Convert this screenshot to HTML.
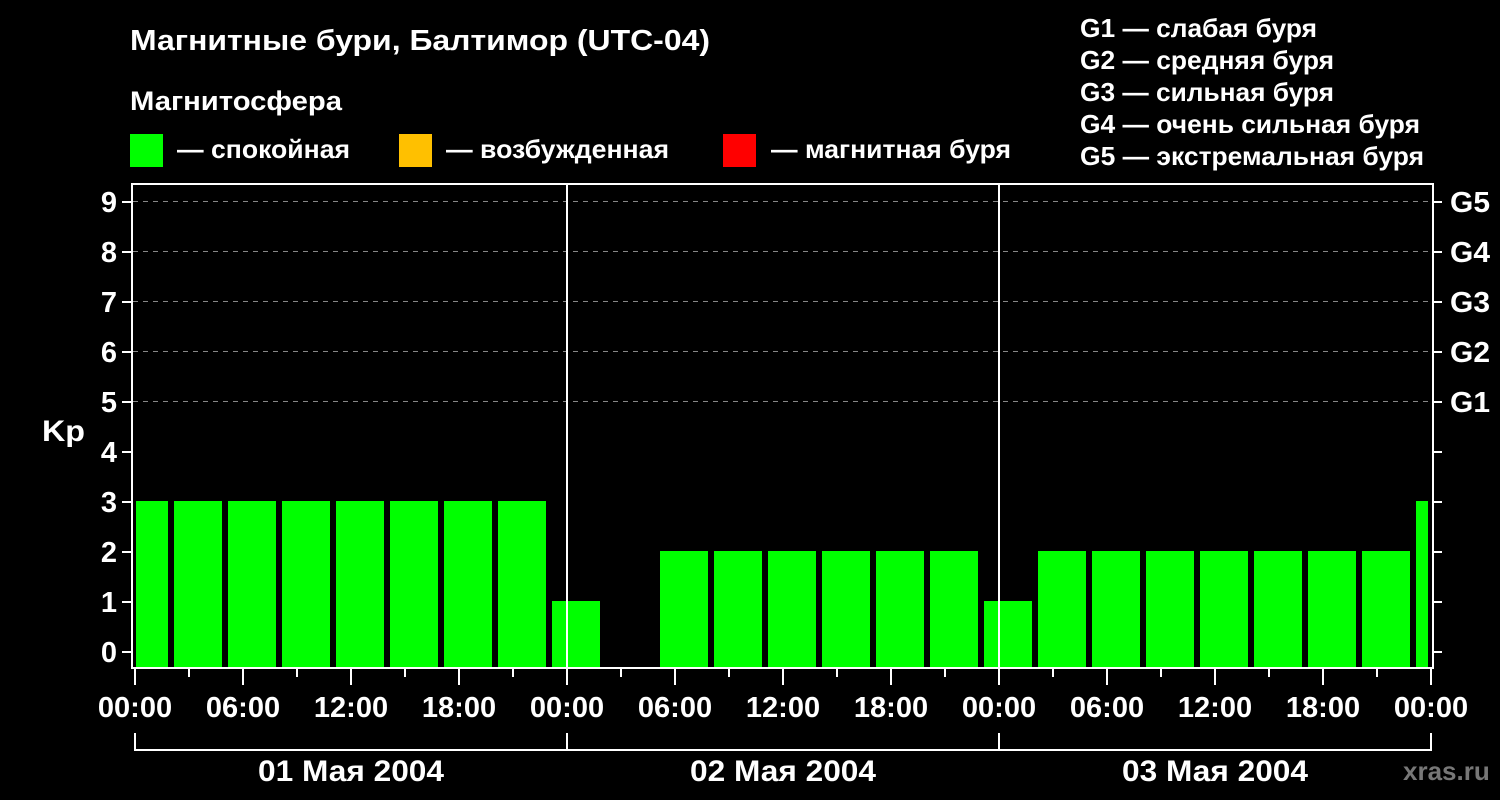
<!DOCTYPE html><html><head><meta charset="utf-8"><style>body{margin:0;background:#000}svg{display:block}text{font-family:"Liberation Sans",sans-serif;font-weight:bold;fill:#fff}</style></head><body>
<svg width="1500" height="800" viewBox="0 0 1500 800">
<rect width="1500" height="800" fill="#000"/>
<text x="130" y="50" font-size="29" textLength="580" lengthAdjust="spacingAndGlyphs">Магнитные бури, Балтимор (UTC-04)</text>
<text x="130" y="110" font-size="27" textLength="212" lengthAdjust="spacingAndGlyphs">Магнитосфера</text>
<rect x="130" y="134" width="33" height="33" fill="#00ff00"/><text x="177" y="158" font-size="26" textLength="173" lengthAdjust="spacingAndGlyphs">— спокойная</text>
<rect x="399" y="134" width="33" height="33" fill="#ffc000"/><text x="446" y="158" font-size="26" textLength="223" lengthAdjust="spacingAndGlyphs">— возбужденная</text>
<rect x="723" y="134" width="33" height="33" fill="#ff0000"/><text x="771" y="158" font-size="26" textLength="240" lengthAdjust="spacingAndGlyphs">— магнитная буря</text>
<g font-size="26"><text x="1080" y="37" textLength="237" lengthAdjust="spacingAndGlyphs">G1 — слабая буря</text><text x="1080" y="69" textLength="254" lengthAdjust="spacingAndGlyphs">G2 — средняя буря</text><text x="1080" y="101" textLength="254" lengthAdjust="spacingAndGlyphs">G3 — сильная буря</text><text x="1080" y="133" textLength="340" lengthAdjust="spacingAndGlyphs">G4 — очень сильная буря</text><text x="1080" y="165" textLength="344" lengthAdjust="spacingAndGlyphs">G5 — экстремальная буря</text></g>
<g stroke="#888" stroke-width="1" stroke-dasharray="5,5"><line x1="133" y1="201.5" x2="1432" y2="201.5"/><line x1="133" y1="251.5" x2="1432" y2="251.5"/><line x1="133" y1="301.5" x2="1432" y2="301.5"/><line x1="133" y1="351.5" x2="1432" y2="351.5"/><line x1="133" y1="401.5" x2="1432" y2="401.5"/></g>
<g fill="#00ff00">
<rect x="136" y="501" width="32" height="166"/>
<rect x="174" y="501" width="48" height="166"/><rect x="228" y="501" width="48" height="166"/><rect x="282" y="501" width="48" height="166"/><rect x="336" y="501" width="48" height="166"/><rect x="390" y="501" width="48" height="166"/><rect x="444" y="501" width="48" height="166"/><rect x="498" y="501" width="48" height="166"/>
<rect x="552" y="601" width="48" height="66"/>
<rect x="660" y="551" width="48" height="116"/><rect x="714" y="551" width="48" height="116"/><rect x="768" y="551" width="48" height="116"/><rect x="822" y="551" width="48" height="116"/><rect x="876" y="551" width="48" height="116"/><rect x="930" y="551" width="48" height="116"/>
<rect x="984" y="601" width="48" height="66"/>
<rect x="1038" y="551" width="48" height="116"/><rect x="1092" y="551" width="48" height="116"/><rect x="1146" y="551" width="48" height="116"/><rect x="1200" y="551" width="48" height="116"/><rect x="1254" y="551" width="48" height="116"/><rect x="1308" y="551" width="48" height="116"/><rect x="1362" y="551" width="48" height="116"/>
<rect x="1416" y="501" width="12" height="166"/>
</g>
<g stroke="#fff" stroke-width="2" fill="none">
<rect x="132" y="184" width="1301" height="484"/>
<line x1="567" y1="184" x2="567" y2="668"/><line x1="999" y1="184" x2="999" y2="668"/>
<path d="M122 202h9M122 252h9M122 302h9M122 352h9M122 402h9M122 452h9M122 502h9M122 552h9M122 602h9M122 652h9"/>
<path d="M1433 202h9M1433 252h9M1433 302h9M1433 352h9M1433 402h9M1433 452h9M1433 502h9M1433 552h9M1433 602h9M1433 652h9"/>
<path d="M135 668v17M189 668v9M243 668v17M297 668v9M351 668v17M405 668v9M459 668v17M513 668v9M567 668v17M621 668v9M675 668v17M729 668v9M783 668v17M837 668v9M891 668v17M945 668v9M999 668v17M1053 668v9M1107 668v17M1161 668v9M1215 668v17M1269 668v9M1323 668v17M1377 668v9M1431 668v17"/>
<path d="M135 733v17h1296v-17M567 733v17M999 733v17"/>
</g>
<g font-size="29" text-anchor="end"><text x="117" y="212">9</text><text x="117" y="262">8</text><text x="117" y="312">7</text><text x="117" y="362">6</text><text x="117" y="412">5</text><text x="117" y="462">4</text><text x="117" y="512">3</text><text x="117" y="562">2</text><text x="117" y="612">1</text><text x="117" y="662">0</text></g>
<text x="42" y="441" font-size="30" textLength="43" lengthAdjust="spacingAndGlyphs">Kp</text>
<g font-size="29"><text x="1450" y="212" textLength="40" lengthAdjust="spacingAndGlyphs">G5</text><text x="1450" y="262" textLength="40" lengthAdjust="spacingAndGlyphs">G4</text><text x="1450" y="312" textLength="40" lengthAdjust="spacingAndGlyphs">G3</text><text x="1450" y="362" textLength="40" lengthAdjust="spacingAndGlyphs">G2</text><text x="1450" y="412" textLength="40" lengthAdjust="spacingAndGlyphs">G1</text></g>
<g font-size="29" text-anchor="middle"><text x="135" y="717">00:00</text><text x="243" y="717">06:00</text><text x="351" y="717">12:00</text><text x="459" y="717">18:00</text><text x="567" y="717">00:00</text><text x="675" y="717">06:00</text><text x="783" y="717">12:00</text><text x="891" y="717">18:00</text><text x="999" y="717">00:00</text><text x="1107" y="717">06:00</text><text x="1215" y="717">12:00</text><text x="1323" y="717">18:00</text><text x="1431" y="717">00:00</text>
<text x="351" y="781" font-size="30" textLength="186" lengthAdjust="spacingAndGlyphs">01 Мая 2004</text><text x="783" y="781" font-size="30" textLength="186" lengthAdjust="spacingAndGlyphs">02 Мая 2004</text><text x="1215" y="781" font-size="30" textLength="186" lengthAdjust="spacingAndGlyphs">03 Мая 2004</text></g>
<text x="1403" y="780" font-size="26" style="fill:#777">xras.ru</text>
</svg></body></html>
